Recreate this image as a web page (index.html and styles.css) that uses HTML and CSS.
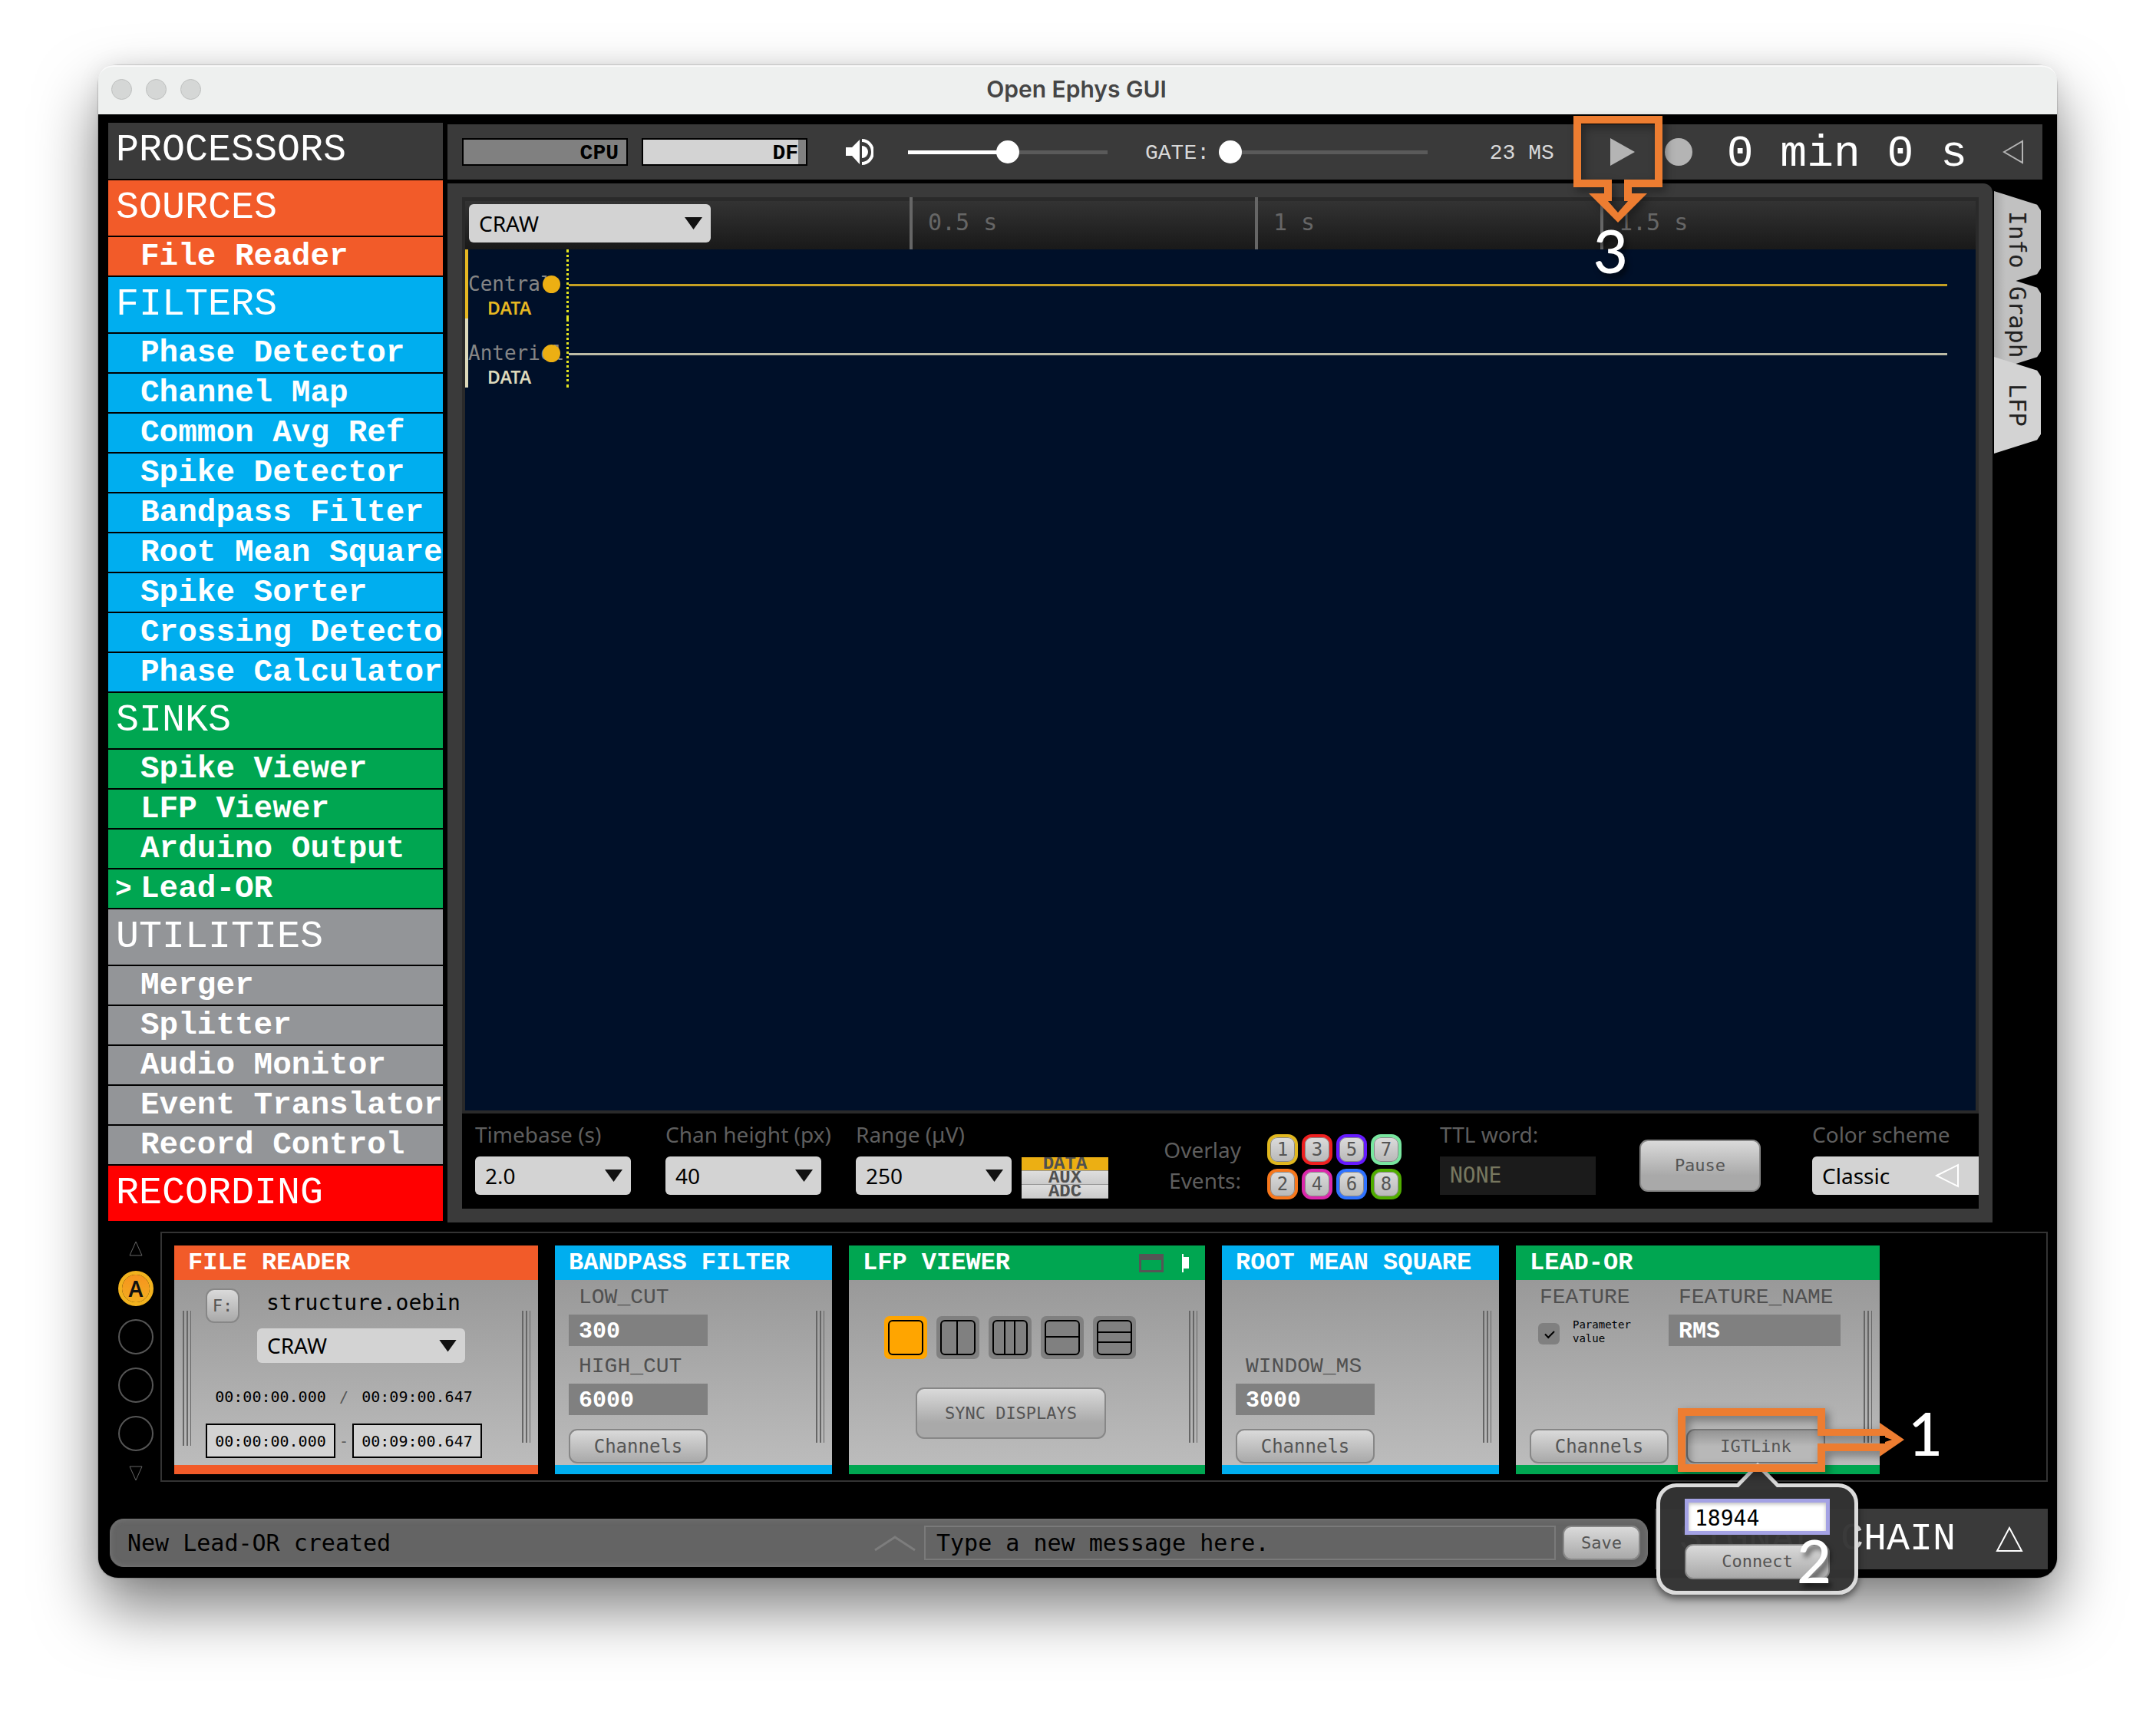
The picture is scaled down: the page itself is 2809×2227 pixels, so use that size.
FILE: index.html
```html
<!DOCTYPE html>
<html lang="en">
<head>
<meta charset="utf-8">
<title>Open Ephys GUI</title>
<link rel="stylesheet" href="styles.css">
</head>
<body>
<main class="window">
  <header class="titlebar">
    <div class="lights"><i></i><i></i><i></i></div>
    <h1>Open Ephys GUI</h1>
  </header>

  <div class="workspace">
    <nav class="sidebar" aria-label="Processors">
      <h2 class="dark">PROCESSORS</h2>
      <section class="orange">
        <h2>SOURCES</h2>
        <ul><li>File Reader</li></ul>
      </section>
      <section class="blue">
        <h2>FILTERS</h2>
        <ul>
          <li>Phase Detector</li><li>Channel Map</li><li>Common Avg Ref</li>
          <li>Spike Detector</li><li>Bandpass Filter</li><li>Root Mean Square</li>
          <li>Spike Sorter</li><li>Crossing Detector</li><li>Phase Calculator</li>
        </ul>
      </section>
      <section class="green">
        <h2>SINKS</h2>
        <ul>
          <li>Spike Viewer</li><li>LFP Viewer</li><li>Arduino Output</li>
          <li class="current">Lead-OR</li>
        </ul>
      </section>
      <section class="gray">
        <h2>UTILITIES</h2>
        <ul>
          <li>Merger</li><li>Splitter</li><li>Audio Monitor</li>
          <li>Event Translator</li><li>Record Control</li>
        </ul>
      </section>
      <h2 class="red">RECORDING</h2>
    </nav>

    <div class="main">
      <div class="toolbar">
        <div class="meter cpu">CPU</div>
        <div class="meter disk">DF</div>
        <svg class="speaker" width="36" height="34" viewBox="0 0 36 34" aria-hidden="true">
          <path d="M0 11h8L18 1v32L8 22H0z" fill="#fff"/>
          <path d="M21 9a8 8 0 0 1 0 16z" fill="#fff"/>
          <path d="M21 2a14 15 0 0 1 0 30" fill="none" stroke="#fff" stroke-width="4"/>
        </svg>
        <input class="slider volume" type="range" value="50" aria-label="Volume">
        <label class="pixel" for="gate">GATE:</label>
        <input class="slider gate" id="gate" type="range" value="0">
        <span class="pixel latency">23 MS</span>
        <div class="play-wrap">
          <button class="icon-button" aria-label="Play"><svg width="32" height="36" viewBox="0 0 32 36"><path d="M0 0l32 18L0 36z" fill="#b4b4b4"/></svg></button>
          <svg class="callout callout-play" width="116" height="140" viewBox="0 0 116 140" aria-hidden="true">
            <path fill="#ed7d31" fill-rule="evenodd" d="M0 0H116V93H76V101H96L58 139L20 101H40V93H0zM10 10V83H50V111H45L58 126L71 111H66V83H106V10z"/>
          </svg>
          <span class="step step-3">3</span>
        </div>
        <button class="icon-button record" aria-label="Record"></button>
        <time class="clock">0 min 0 s</time>
        <button class="icon-button collapse" aria-label="Collapse"><svg width="28" height="32" viewBox="0 0 28 32"><path d="M2 16L26 2V30z" fill="none" stroke="#b4b4b4" stroke-width="2"/></svg></button>
      </div>

      <div class="stage">
        <div class="panel">
          <div class="display">
            <div class="ruler">
              <div class="stream"><span class="select"><select aria-label="Stream"><option>CRAW</option></select></span></div>
              <span class="tick">0.5 s</span><span class="tick">1 s</span><span class="tick">1.5 s</span>
            </div>
            <div class="canvas">
              <div class="channel yellow">
                <div class="names"><span>Central</span><b>DATA</b></div>
                <div class="trace"><div class="line"></div></div>
                <i class="dot"></i>
              </div>
              <div class="channel cream">
                <div class="names"><span>Anteriol</span><b>DATA</b></div>
                <div class="trace"><div class="line"></div></div>
                <i class="dot"></i>
              </div>
            </div>
          </div>
          <div class="controls">
            <div class="triple">
              <div class="field"><label for="tb">Timebase (s)</label><span class="select"><select id="tb"><option>2.0</option></select></span></div>
              <div class="field"><label for="ch">Chan height (px)</label><span class="select"><select id="ch"><option>40</option></select></span></div>
              <div class="field"><label for="rg">Range (μV)</label><span class="select"><select id="rg"><option>250</option></select></span></div>
            </div>
            <div class="types"><button class="on">DATA</button><button>AUX</button><button>ADC</button></div>
            <div class="overlay-label">Overlay<br>Events:</div>
            <div class="events">
              <button class="e1">1</button><button class="e3">3</button><button class="e5">5</button><button class="e7">7</button>
              <button class="e2">2</button><button class="e4">4</button><button class="e6">6</button><button class="e8">8</button>
            </div>
            <div class="field ttl"><label for="ttl">TTL word:</label><input id="ttl" value="NONE" readonly></div>
            <button class="btn pause">Pause</button>
            <div class="field scheme"><label for="cs">Color scheme</label>
              <span class="select open"><select id="cs"><option>Classic</option></select>
              <svg width="32" height="32" viewBox="0 0 32 32" aria-hidden="true"><path d="M2 16L30 2V30z" fill="none" stroke="#fff" stroke-width="2"/></svg></span>
            </div>
          </div>
        </div>
        <div class="tabs">
          <button class="tab info">Info</button>
          <button class="tab graph">Graph</button>
          <button class="tab lfp">LFP</button>
        </div>
      </div>
    </div>
  </div>

  <div class="chain">
    <div class="pager">
      <button class="icon-button" aria-label="Up"><svg width="20" height="20" viewBox="0 0 20 20"><path d="M10 1L18 19H2z" fill="none" stroke="#666"/></svg></button>
      <button class="page active">A</button>
      <button class="page" aria-label="B"></button>
      <button class="page" aria-label="C"></button>
      <button class="page" aria-label="D"></button>
      <button class="icon-button last" aria-label="Down"><svg width="20" height="20" viewBox="0 0 20 20"><path d="M10 19L18 1H2z" fill="none" stroke="#666"/></svg></button>
    </div>
    <div class="nodes">
      <article class="node orange reader">
        <h3>FILE READER</h3>
        <div class="body">
          <i class="grip"></i>
          <div class="file">
            <div class="file-row"><button class="btn">F:</button><span>structure.oebin</span></div>
            <span class="select"><select aria-label="Recording"><option>CRAW</option></select></span>
            <div class="times">
              <span>00:00:00.000</span><em>/</em><span>00:09:00.647</span>
              <input aria-label="Start" value="00:00:00.000"><em>-</em><input aria-label="End" value="00:09:00.647">
            </div>
          </div>
          <i class="grip"></i>
        </div>
      </article>

      <article class="node blue narrow">
        <h3>BANDPASS FILTER</h3>
        <div class="body">
          <div class="params">
            <label for="low">LOW_CUT</label><input id="low" value="300">
            <label for="high">HIGH_CUT</label><input id="high" value="6000">
            <button class="btn large">Channels</button>
          </div>
          <i class="grip"></i>
        </div>
      </article>

      <article class="node green viewer">
        <h3>LFP VIEWER
          <svg width="66" height="24" viewBox="0 0 66 24" aria-hidden="true">
            <path d="M0 0h32v24H0zM3 8v13h26V8z" fill="#555" fill-rule="evenodd"/>
            <path d="M56 0h2v4h7v15h-7v5h-2z" fill="#fff"/>
          </svg>
        </h3>
        <div class="body">
          <div class="layouts">
            <div class="layout-row">
              <button class="on" aria-label="Single"><svg viewBox="0 0 56 56"><rect x="6" y="6" width="44" height="44" rx="5"/></svg></button>
              <button aria-label="Two columns"><svg viewBox="0 0 56 56"><rect x="6" y="6" width="44" height="44" rx="5"/><path d="M27 6v44"/></svg></button>
              <button aria-label="Three columns"><svg viewBox="0 0 56 56"><rect x="6" y="6" width="44" height="44" rx="5"/><path d="M21 6v44M34 6v44"/></svg></button>
              <button aria-label="Two rows"><svg viewBox="0 0 56 56"><rect x="6" y="6" width="44" height="44" rx="5"/><path d="M6 27h44"/></svg></button>
              <button aria-label="Three rows"><svg viewBox="0 0 56 56"><rect x="6" y="6" width="44" height="44" rx="5"/><path d="M6 21h44M6 34h44"/></svg></button>
            </div>
            <button class="btn sync">SYNC DISPLAYS</button>
          </div>
          <i class="grip"></i>
        </div>
      </article>

      <article class="node blue narrow">
        <h3>ROOT MEAN SQUARE</h3>
        <div class="body">
          <div class="params">
            <label for="win">WINDOW_MS</label><input id="win" value="3000">
            <button class="btn large">Channels</button>
          </div>
          <i class="grip"></i>
        </div>
      </article>

      <article class="node green lead">
        <h3>LEAD-OR</h3>
        <div class="body">
          <div class="params top">
            <span class="caption">FEATURE</span>
            <label class="check"><input type="checkbox" checked><span>Parameter<br>value</span></label>
            <button class="btn large">Channels</button>
          </div>
          <div class="params top wide">
            <label for="fname">FEATURE_NAME</label><input id="fname" value="RMS">
            <div class="igt">
              <button class="btn pressed">IGTLink</button>
              <div class="popup">
                <svg class="tip" width="64" height="35" viewBox="0 0 64 35" aria-hidden="true"><path d="M0 30H5L32 3L59 30H64V35H0z" fill="#353535"/><path d="M0 29.500H6L32 3L58 29.500H64" fill="none" stroke="#dcdcdc" stroke-width="5"/></svg>
                <input aria-label="Port" value="18944">
                <button class="btn">Connect</button>
                <span class="step step-2">2</span>
              </div>
              <svg class="callout callout-igt" width="296" height="84" viewBox="0 0 296 84" aria-hidden="true">
                <path fill="#ed7d31" fill-rule="evenodd" d="M0 0H192V27H263V19L295 41L263 63V56H192V83H0zM10 10V73H182V46H270V44L279 41L270 38V36H182V10z"/>
              </svg>
              <span class="step step-1">1</span>
            </div>
          </div>
          <i class="grip"></i>
        </div>
      </article>
    </div>
  </div>

  <footer class="bottom">
    <div class="messages">
      <output>New Lead-OR created</output>
      <svg width="54" height="22" viewBox="0 0 54 22" aria-hidden="true"><path d="M1 20L27 3L53 20" fill="none" stroke="#7d7d7d" stroke-width="3"/></svg>
      <input aria-label="Message" value="Type a new message here.">
      <button class="btn">Save</button>
    </div>
    <div class="chain-title">SIGNAL CHAIN
      <svg width="36" height="34" viewBox="0 0 36 34" aria-hidden="true"><path d="M18 2L34 32H2z" fill="none" stroke="#fff" stroke-width="2"/></svg>
    </div>
  </footer>
</main>
</body>
</html>
```
FILE: styles.css
```css
:root {
  --mono: "DejaVu Sans Mono", monospace;
  --square: "Liberation Mono", monospace;
  --sans: "Noto Sans", sans-serif;
}
* { box-sizing: border-box; }
body { margin: 0; padding: 85px 129px 171px 128px; background: #fff; font-family: var(--mono); }
h1, h2, h3, ul { margin: 0; padding: 0; font-weight: 400; }
ul { list-style: none; }
button, input, select { font: inherit; color: inherit; border: 0; margin: 0; padding: 0; min-width: 0; border-radius: 0; background: none; }
svg { display: block; }

.window { background: #000; border-radius: 26px; padding-bottom: 11px;
  box-shadow: 0 0 2px rgba(0,0,0,.5), 0 40px 80px rgba(0,0,0,.5), 0 0 30px rgba(0,0,0,.08); }

.titlebar { display: grid; grid-template-columns: 1fr auto 1fr; align-items: center; height: 64px; padding: 0 20px 4px 17px;
  background: #eef0ef; border-radius: 20px 20px 0 0; border-top: 2px solid #fafafa; }
.titlebar h1 { font: 600 30px/40px Inter, sans-serif; color: #454545; }
.lights { display: flex; gap: 18px; }
.lights i { width: 27px; height: 27px; border-radius: 50%; background: #d5d7d6; border: 1px solid #bdbfbe; }

.workspace { display: flex; gap: 6px; padding: 11px 19px 0 13px; }
.orange { --hue: #f25b29; }
.blue { --hue: #00aeef; }
.green { --hue: #00a651; }
.gray { --hue: #939598; }
.red { --hue: #f00; }
.dark { --hue: #3a3a3a; }

/* Processor list */
.sidebar { flex: 0 0 436px; overflow: hidden; color: #fff; font-family: var(--square); }
.sidebar h2 { height: 74px; border-bottom: 2px solid #000; padding-left: 10px; background: var(--hue); font-size: 50px; line-height: 71px; }
.sidebar .dark { height: 75px; }
.sidebar li { height: 52px; border-bottom: 2px solid #000; padding-left: 42px; background: var(--hue); font-weight: 700; font-size: 41px; line-height: 50px; white-space: nowrap; overflow: hidden; }
.sidebar .current { padding-left: 9px; }
.sidebar .current::before { content: ">"; display: inline-block; width: 33px; font-size: 36px; }

.main { flex: 1; min-width: 0; display: flex; flex-direction: column; gap: 5px; padding-top: 2px; }

/* Top control bar */
.toolbar { display: flex; align-items: center; height: 72px; padding: 0 24px 0 19px; background: #3a3a3a; color: #d8d8d8; }
.pixel { padding-top: 3px; font: 28px/30px var(--square); }
.meter { width: 216px; height: 36px; margin-right: 18px; padding-right: 10px; border: 2px solid #000; background: #808080; color: #000; font: 700 28px/35px var(--square); text-align: right; }
.disk { background: linear-gradient(90deg, #d3d3d3 202px, #808080 202px); }
.speaker { margin: 0 45px 0 32px; }
.slider { appearance: none; height: 30px; background: linear-gradient(#5a5a5a, #5a5a5a) center / 100% 5px no-repeat; }
.slider::-webkit-slider-thumb { appearance: none; width: 30px; height: 30px; border-radius: 50%; background: #fff; }
.volume { width: 260px; margin-right: 49px; background-image: linear-gradient(90deg, #fff 50%, #5a5a5a 50%); }
.gate { width: 272px; margin-left: 12px; }
.latency { margin-left: auto; }
.icon-button { display: block; }
.play-wrap { position: relative; margin-left: 73px; }
.record { width: 36px; height: 36px; margin-left: 39px; border-radius: 50%; background: #b4b4b4; }
.clock { margin: 0 46px 0 45px; padding-top: 5px; font: 58px/64px var(--square); color: #fff; white-space: nowrap; }

/* Annotations lying over the interface */
.callout { position: absolute; z-index: 5; filter: drop-shadow(4px 5px 6px rgba(0,0,0,.4)); pointer-events: none; }
.callout-play { left: -48px; top: -29px; }
.callout-igt { left: -11px; top: -27px; }
.step { position: absolute; z-index: 6; font: 500 78px/80px Lato, sans-serif; color: #fff; text-shadow: 4px 6px 6px rgba(0,0,0,.5); }
.step-1 { left: 289px; top: -35px; }
.step-2 { left: 178px; top: 55px; }
.step-3 { left: -22px; top: 106px; }

/* Viewer */
.stage { flex: 1; display: flex; min-height: 0; }
.panel { flex: 1; min-width: 0; display: flex; flex-direction: column; padding: 18px 18px 18px 19px; background: #3a3a3a; border-radius: 0 12px 0 0; }
.display { flex: 1; display: flex; flex-direction: column; padding: 0 4px 4px; background: #2a2a2a; }
.ruler { display: grid; grid-template-columns: 579px 450px 450px 1fr; height: 68px; background: linear-gradient(#2a2a2a 5px, #333 5px, #191919); }
.stream { padding: 9px 0 0 5px; }
.stream .select { width: 315px; }
.tick { border-left: 4px solid #666; padding-left: 20px; color: #666; font-size: 30px; line-height: 66px; }
.canvas { flex: 1; background: #001029; }
.channel { position: relative; display: flex; height: 90px; border-left: 4px solid var(--trace); }
.yellow { --trace: #e6b822; }
.cream { --trace: #ddd9bb; }
.names { width: 128px; padding-top: 30px; }
.names span { display: block; font-size: 26px; line-height: 30px; color: #858585; }
.names b { display: block; padding-left: 25px; font: 600 23px/32px var(--sans); color: var(--trace); }
.trace { flex: 1; border-left: 3px dotted #e6e61e; padding: 45px 37px 0 0; }
.line { height: 3px; background: var(--trace); opacity: .85; }
.dot { position: absolute; left: 97px; top: 34px; width: 23px; height: 23px; border-radius: 50%; background: #ecaf13; }

.select { display: grid; height: 50px; border-radius: 6px; background: #d3d3d3; font: 28px/50px var(--sans); color: #000; }
.select select { grid-area: 1 / 1; appearance: none; padding-left: 13px; }
.select::after { content: ""; grid-area: 1 / 1; align-self: center; justify-self: end; width: 23px; height: 16px; margin-right: 11px; background: #111; clip-path: polygon(0 0, 100% 0, 50% 100%); pointer-events: none; }

.controls { display: flex; height: 124px; padding-left: 17px; background: #000; color: #5e5e5e; font: 28px/40px var(--sans); }
.triple { display: flex; gap: 45px; }
.field { width: 203px; padding-top: 7px; }
.field label { display: block; margin-bottom: 9px; white-space: nowrap; }
.types { margin: 57px 0 0 13px; width: 113px; display: grid; grid-auto-rows: 18px; align-content: start; }
.types button { overflow: hidden; border-bottom: 1px solid #999; background: linear-gradient(#dedede, #cbcbcb); color: #505050; font: 700 24px/18px var(--square); }
.types .on { background: #ecaf13; }
.overlay-label { width: 173px; margin-top: 27px; text-align: right; }
.events { display: grid; grid-template-columns: repeat(4, 40px); grid-auto-rows: 40px; gap: 5px; margin: 27px 0 0 34px; }
.events button { border: 4px solid var(--ring); border-radius: 13px; background: linear-gradient(#dcdcdc, #b8b8b8); box-shadow: inset 0 0 0 1px #888; color: #555; font: 24px/30px var(--mono); }
.e1 { --ring: #e0b71f; } .e3 { --ring: #ee2020; } .e5 { --ring: #661aff; } .e7 { --ring: #78e69f; }
.e2 { --ring: #f7771c; } .e4 { --ring: #db28ab; } .e6 { --ring: #2f72ff; } .e8 { --ring: #50ad00; }
.ttl { margin-left: 50px; }
.ttl input { display: block; width: 100%; height: 50px; padding-left: 13px; background: #1b1b1b; color: #77775f; font: 28px/50px var(--mono); }
.btn { border: 2px solid #878787; border-radius: 11px; background: linear-gradient(#dadada, #a9a9a9); color: #555; font: 22px/30px var(--mono); white-space: nowrap; }
.btn.large { font-size: 24px; }
.pause { width: 158px; height: 68px; margin: 34px 0 0 57px; background: linear-gradient(#dadada, #a9a9a9 70%); }
.scheme { flex: 1; margin-left: 67px; }
.scheme .select { border-radius: 6px 0 0 6px; }
.open::after { display: none; }
.open svg { grid-area: 1 / 1; align-self: center; justify-self: end; margin-right: 25px; pointer-events: none; }

.tabs { flex: 0 0 65px; padding: 10px 2px 0; }
.tab { position: relative; display: block; width: 61px; height: 126px; background: linear-gradient(90deg, #aaa, #c1c1c1 25%);
  clip-path: polygon(0 0, 92% 14%, 100% 20%, 100% 80%, 92% 86%, 0 100%); writing-mode: vertical-rl; text-align: center; font-size: 31px; line-height: 50px; color: #222; }
.tab + .tab { margin-top: -18px; }
.info, .lfp { z-index: 1; }
.lfp { background: #d3d3d3; }

/* Signal chain */
.chain { display: flex; padding: 12px 12px 0 17px; }
.pager { flex: 0 0 64px; display: flex; flex-direction: column; align-items: center; gap: 17px; padding-top: 12px; }
.page { flex: none; width: 46px; height: 46px; border: 2px solid #555; border-radius: 50%; background-clip: padding-box; }
.active { margin-top: 2px; border: 5px solid #f2b21e; background: linear-gradient(#f7931e, #f2ae20) padding-box; color: #111; font: 600 28px/36px var(--sans); }
.last { margin-top: 2px; }
.nodes { flex: 1; display: flex; gap: 22px; min-width: 0; border: 2px solid #333; padding: 16px 0 8px 16px; }
.node { flex: none; width: 361px; display: flex; flex-direction: column; border-bottom: 12px solid var(--hue); }
.node h3 { display: flex; align-items: center; justify-content: space-between; height: 45px; padding: 0 20px 0 18px; background: var(--hue); color: #fff; font: 700 32px/45px var(--square); white-space: nowrap; }
.reader, .lead { width: 474px; }
.viewer { width: 464px; }
.body { display: flex; height: 241px; padding-right: 10px; background: linear-gradient(#999, #bcbcbc); }
.grip { flex: none; width: 11px; height: 172px; margin: 40px 0 0 auto; background: repeating-linear-gradient(90deg, #666 0 2px, transparent 2px 4px, transparent 4px 5px); }
.grip:first-child { margin-left: 11px; height: 176px; }

.file { margin: 11px 0 0 19px; }
.file-row { display: flex; gap: 35px; font-size: 28px; line-height: 38px; }
.file-row .btn { width: 44px; height: 45px; }
.file .select { width: 271px; height: 45px; margin: 7px 0 29px 67px; line-height: 45px; }
.times { display: grid; grid-template-columns: 169px 22px 169px; grid-template-rows: 30px 45px; row-gap: 20px; font: 20px/30px var(--mono); text-align: center; color: #000; }
.times input { width: 100%; border: 2px solid #000; background: #d3d3d3; text-align: center; }
.times em { font-style: normal; color: #555; align-self: center; }

.params { display: flex; flex-direction: column; justify-content: flex-end; width: 181px; padding-bottom: 2px; margin-left: 18px; }
.params > label:not(.check), .caption { margin-bottom: 7px; padding: 1px 0 0 13px; font: 28px/30px var(--square); color: #505050; }
.params > input { height: 41px; margin-bottom: 11px; padding: 2px 0 0 13px; background: #808080; color: #fff; font: 700 30px/39px var(--square); }
.params .btn { height: 45px; margin-top: 7px; }
.params.top { justify-content: flex-start; padding-top: 7px; }
.params.top > .btn, .igt { margin-top: auto; }
.params.wide { width: 224px; margin-left: 0; }
.check { display: flex; gap: 17px; padding: 4px 0 0 11px; font: 14px/18px var(--mono); color: #000; }
.check input { appearance: none; width: 28px; height: 28px; margin-top: 7px; border-radius: 6px; background: #808080; }
.check input::before { content: ""; display: block; width: 10px; height: 5px; margin: 10px 9px; border: solid #000; border-width: 0 0 2px 2px; rotate: -45deg; }
.igt { position: relative; width: 181px; margin-left: 23px; }
.igt > .btn { display: block; width: 100%; margin: 0; }
.pressed { background: linear-gradient(#949494, #b8b8b8 50%); border-color: #777; }
.popup { position: absolute; z-index: 4; left: -39px; top: 71px; width: 263px; height: 145px; display: flex; flex-direction: column; gap: 12px; padding: 15px 32px; border: 5px solid #dcdcdc; border-radius: 26px; background: rgba(52,52,52,.97); box-shadow: 0 5px 10px rgba(0,0,0,.5); }
.popup input { height: 48px; padding: 4px 0 0 8px; border: 5px solid #a4a2e4; background: #fff; box-shadow: inset 0 2px 5px #bbb; color: #000; font: 28px/34px var(--mono); }
.popup .btn { margin: 0; height: 48px; }
.tip { position: absolute; left: 95px; top: -32px; }

.layouts { padding: 47px 0 0 46px; }
.layout-row { display: flex; gap: 12px; }
.layout-row button { width: 56px; height: 56px; border-radius: 7px; background: #808080; }
.layout-row .on { background: #ffa500; }
.layout-row svg { fill: none; stroke: #000; stroke-width: 2; }
.sync { width: 248px; height: 67px; margin: 37px 0 0 41px; background: linear-gradient(#dadada, #a9a9a9 70%); }

.bottom { display: flex; align-items: flex-end; gap: 9px; padding: 35px 12px 0 15px; }
.messages { flex: 1; min-width: 0; display: flex; align-items: center; height: 63px; margin-bottom: 3px; padding: 0 9px 0 22px; border-radius: 18px; border: 1px solid #6e6e6e; background: #646464; box-shadow: inset 0 0 6px #777; font: 30px/40px var(--mono); color: #000; }
.messages output { flex: 0 0 973px; }
.messages input { flex: 1; height: 45px; margin: 0 9px 0 11px; padding-left: 14px; border: 2px solid #7a7a7a; }
.messages .btn { width: 101px; height: 45px; }
.chain-title { flex: 0 0 512px; display: flex; align-items: center; justify-content: space-between; height: 79px; padding: 0 32px 0 32px; background: #3a3a3a; color: #fff; font: 50px/76px var(--square); white-space: nowrap; }
```
